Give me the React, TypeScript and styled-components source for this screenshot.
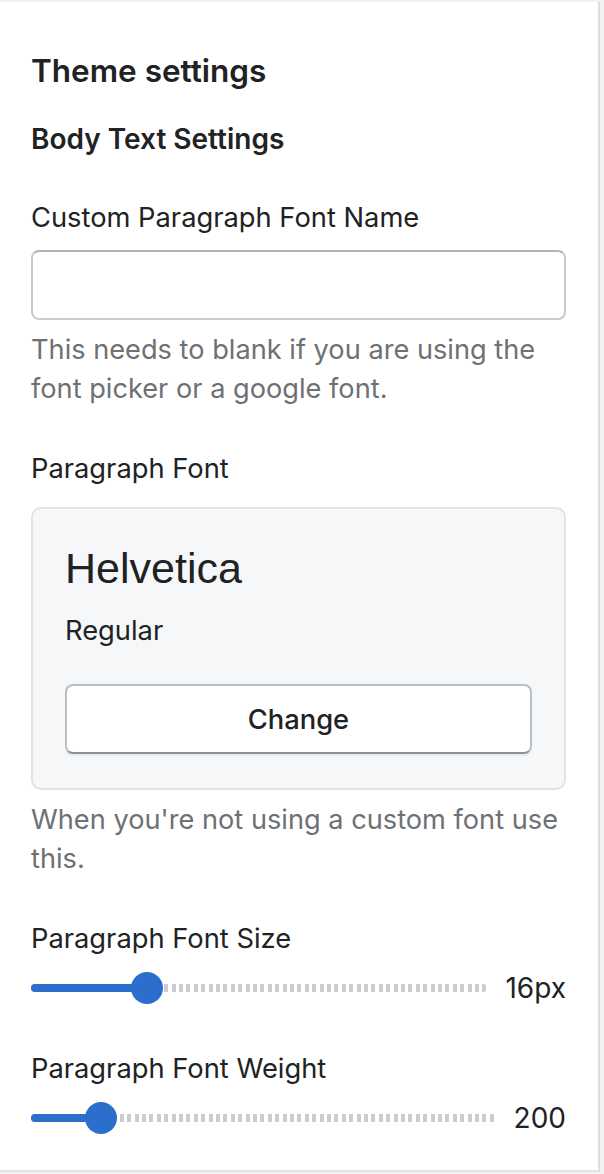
import React from "react";
import styled, { createGlobalStyle } from "styled-components";

const Global = createGlobalStyle`
  html, body { margin: 0; padding: 0; background: #f1f2f3; }
  body {
    font-family: Inter, "Noto Sans", "Liberation Sans", sans-serif;
    color: #202223;
    -webkit-font-smoothing: antialiased;
  }
  * { box-sizing: border-box; }
`;

const Panel = styled.div`
  width: 600px;
  margin-top: 2px;
  background: #ffffff;
  border-right: 2px solid #dcdee0;
  border-bottom: 2px solid #e1e3e5;
  padding: 49px 32px 37px 31px;
  height: 1170px;
  display: flex;
  flex-direction: column;
`;

const Title = styled.h1`
  margin: 0;
  font-size: 31.5px;
  line-height: 40px;
  font-weight: 600;
`;

const SubTitle = styled.h2`
  margin: 28px 0 0;
  font-size: 28px;
  line-height: 40px;
  font-weight: 600;
`;

const Field = styled.div<{ $gap: number }>`
  margin-top: ${(p) => p.$gap}px;
  display: flex;
  flex-direction: column;
`;

const Label = styled.div`
  font-size: 27.3px;
  line-height: 40px;
  font-weight: 400;
`;

const Input = styled.input`
  margin-top: 12px;
  height: 70px;
  width: 100%;
  border: 2px solid #c9cccf;
  border-top-color: #aeb4b9;
  border-radius: 8px;
  background: #fff;
  font: inherit;
  font-size: 28px;
  padding: 0 22px;
  outline: none;
`;

const Help = styled.p`
  margin: 10px 0 0;
  font-size: 27.2px;
  line-height: 39px;
  color: #6d7175;
`;

const FontCard = styled.div`
  margin-top: 18px;
  background: #f6f7f9;
  border: 2px solid #e1e3e5;
  border-radius: 10px;
  padding: 32px 32px 34px;
  display: flex;
  flex-direction: column;
`;

const FontName = styled.div`
  font-family: "Liberation Sans", Arial, sans-serif;
  font-size: 43px;
  line-height: 54px;
  color: #202223;
`;

const FontStyle = styled.div`
  margin-top: 16px;
  font-size: 27.3px;
  line-height: 40px;
`;

const ChangeButton = styled.button`
  margin-top: 33px;
  height: 70px;
  width: 100%;
  background: #ffffff;
  border: 2px solid #babfc3;
  border-bottom-color: #8c9196;
  border-radius: 8px;
  box-shadow: 0 2px 0 rgba(0, 0, 0, 0.05);
  font-family: inherit;
  font-size: 27.3px;
  font-weight: 500;
  color: #202223;
  cursor: pointer;
`;

const SliderRow = styled.div`
  margin-top: 13px;
  height: 32px;
  display: flex;
  align-items: center;
  gap: 18px;
`;

const Track = styled.div`
  position: relative;
  flex: 1;
  height: 8px;
  border-radius: 4px;
`;

const TrackRest = styled.div`
  position: absolute;
  inset: 0;
  border-radius: 4px;
  overflow: hidden;
  background: repeating-linear-gradient(
    to right,
    #c9ccd0 0,
    #c9ccd0 4px,
    transparent 4px,
    transparent 7.4px
  );
`;

const TrackFill = styled.div`
  position: absolute;
  left: 0;
  top: 0;
  bottom: 0;
  border-radius: 4px;
  background: #2c6ecb;
`;

const Thumb = styled.div`
  position: absolute;
  top: 50%;
  width: 32px;
  height: 32px;
  margin-top: -16px;
  margin-left: -16px;
  border-radius: 50%;
  background: #2c6ecb;
`;

const Value = styled.div`
  font-size: 28px;
  line-height: 40px;
  color: #202223;
  text-align: right;
`;

function Slider({ value, min, max, unit }: { value: number; min: number; max: number; unit?: string }) {
  const frac = (value - min) / (max - min);
  const pos = `calc(16px + (100% - 32px) * ${frac})`;
  return (
    <SliderRow>
      <Track>
        <TrackRest />
        <TrackFill style={{ width: pos }} />
        <Thumb style={{ left: pos }} />
      </Track>
      <Value>
        {value}
        {unit ?? ""}
      </Value>
    </SliderRow>
  );
}

export default function App() {
  return (
    <>
      <Global />
      <Panel>
        <Title>Theme settings</Title>
        <SubTitle>Body Text Settings</SubTitle>

        <Field $gap={39}>
          <Label>Custom Paragraph Font Name</Label>
          <Input type="text" />
          <Help>This needs to blank if you are using the font picker or a google font.</Help>
        </Field>

        <Field $gap={41}>
          <Label>Paragraph Font</Label>
          <FontCard>
            <FontName>Helvetica</FontName>
            <FontStyle>Regular</FontStyle>
            <ChangeButton>Change</ChangeButton>
          </FontCard>
          <Help>When you're not using a custom font use this.</Help>
        </Field>

        <Field $gap={41}>
          <Label>Paragraph Font Size</Label>
          <Slider value={16} min={12} max={29} unit="px" />
        </Field>

        <Field $gap={45}>
          <Label>Paragraph Font Weight</Label>
          <Slider value={200} min={100} max={900} />
        </Field>
      </Panel>
    </>
  );
}
